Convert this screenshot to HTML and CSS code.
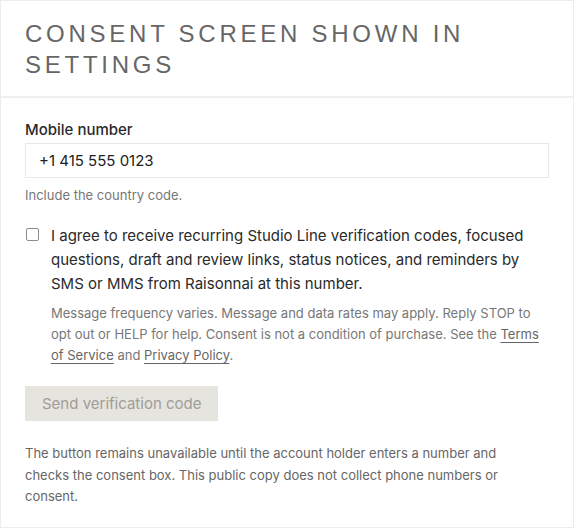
FILE: index.html
```html
<!DOCTYPE html>
<html lang="en">
<head>
    <meta charset="UTF-8">
    <meta name="viewport" content="width=device-width, initial-scale=1.0">
    <title>Consent screen shown in settings</title>
    <link rel="stylesheet" href="styles.css">
</head>
<body>
    <section class="consent-card">
        <header class="card-header">
            <h1>Consent screen shown in settings</h1>
        </header>

        <div class="card-body">
            <label class="field-label" for="phone">Mobile number</label>
            <input type="text" id="phone" class="field-input" value="+1 415 555 0123">
            <p class="field-hint">Include the country code.</p>

            <div class="consent-row">
                <input type="checkbox" id="consent" class="consent-box">
                <div class="consent-text">
                    <label for="consent">I agree to receive recurring Studio Line verification codes, focused questions, draft and review links, status notices, and reminders by SMS or MMS from Raisonnai at this number.</label>
                    <p class="consent-fine">Message frequency varies. Message and data rates may apply. Reply STOP to opt out or HELP for help. Consent is not a condition of purchase. See the <a href="#">Terms of Service</a> and <a href="#">Privacy Policy</a>.</p>
                </div>
            </div>

            <button class="send-button" disabled>Send verification code</button>

            <p class="card-note">The button remains unavailable until the account holder enters a number and checks the consent box. This public copy does not collect phone numbers or consent.</p>
        </div>
    </section>
</body>
</html>
```

FILE: styles.css
```css
body {
    margin: 0;
    font-family: Inter, "Noto Sans", sans-serif;
    background-color: #fff;
    color: #2a2a2a;
}
.consent-card {
    width: 574px;
    height: 528px;
    box-sizing: border-box;
    border: 1px solid #ececec;
    background-color: #fff;
}
.card-header {
    padding: 17px 24px 16px;
    border-bottom: 2px solid #efefef;
}
.card-header h1 {
    margin: 0;
    font-family: "Liberation Sans", Arial, sans-serif;
    font-weight: 400;
    font-size: 24px;
    line-height: 31px;
    letter-spacing: 3.75px;
    text-transform: uppercase;
    color: #666;
}
.card-body {
    padding: 22px 24px 0;
}
.field-label {
    display: block;
    font-size: 15px;
    font-weight: 500;
    line-height: 20px;
    color: #2a2a2a;
    margin-bottom: 3px;
}
.field-input {
    display: block;
    width: 100%;
    box-sizing: border-box;
    height: 35px;
    padding: 0 13px;
    border: 1px solid #e8e8e8;
    border-radius: 0;
    font-family: inherit;
    font-size: 15px;
    color: #222;
    background: #fff;
}
.field-hint {
    margin: 8px 0 0;
    font-size: 13px;
    line-height: 18px;
    color: #777;
}
.consent-row {
    display: flex;
    gap: 12px;
    margin-top: 20px;
}
.consent-box {
    appearance: none;
    -webkit-appearance: none;
    margin: 4px 0 0 1px;
    width: 13px;
    height: 13px;
    flex-shrink: 0;
    border: 1px solid #8c8c8c;
    border-radius: 2px;
    background: #fff;
}
.consent-text label {
    display: block;
    font-size: 15px;
    line-height: 24px;
    color: #2a2a2a;
}
.consent-fine {
    margin: 7px 0 0;
    font-size: 13px;
    line-height: 21px;
    color: #777;
}
.consent-fine a {
    color: #666;
    text-decoration: underline;
    text-underline-offset: 3px;
}
.send-button {
    display: block;
    margin-top: 20px;
    height: 35px;
    padding: 0 17px;
    border: none;
    background-color: #e6e4df;
    color: #a19d97;
    font-family: inherit;
    font-size: 15px;
}
.card-note {
    margin: 22px 0 0;
    max-width: 500px;
    font-size: 13px;
    line-height: 21.5px;
    color: #666;
}
```
